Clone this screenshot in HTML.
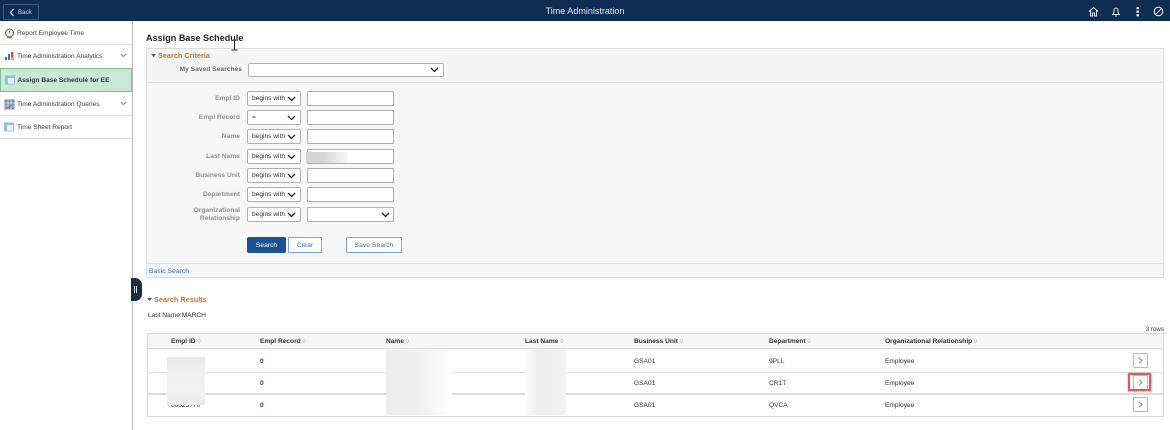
<!DOCTYPE html>
<html><head><meta charset="utf-8">
<style>
html,body{margin:0;padding:0;background:#fff}
#p{position:relative;width:1170px;height:430px;overflow:hidden;background:#fff;font-family:"Liberation Sans",sans-serif;font-size:6.6px;color:#333;filter:blur(.35px)}
#p div,#p svg{position:absolute;box-sizing:border-box}
.t{white-space:nowrap}
.sep{left:0;width:132px;height:1px;background:#dcdcdc}
.nav{left:17px;font-size:6.6px;color:#3c3c3c;white-space:nowrap;line-height:9px}
.lab{right:930px;font-size:6.7px;font-weight:bold;color:#8f8f8f;white-space:nowrap;line-height:9px;text-align:right}
.sel{left:247px;width:54px;height:15px;border:1px solid #b0b0b0;border-radius:2px;background:#fff;font-size:6.6px;line-height:13px;padding-left:4px;color:#333}
.inp{left:307px;width:87px;height:15px;border:1px solid #b0b0b0;border-radius:1px;background:#fff}
.th{font-size:6.6px;font-weight:bold;color:#333;white-space:nowrap;line-height:9px;top:337px}
.th span{font-weight:normal;color:#aaa}
.td{font-size:6.6px;color:#333;white-space:nowrap;line-height:9px}
.rb{left:1133px;width:15px;height:15px;border:1px solid #b8b8b8;border-radius:2px;background:#fff}
</style></head><body><div id="p">
<!-- header -->
<div style="left:0;top:0;width:1170px;height:21px;background:#0f2d52"></div>
<div style="left:3px;top:4px;width:36px;height:16px;border:1px solid #3f5a7c;border-radius:2px"></div>
<svg style="left:9px;top:8px" width="6" height="9" viewBox="0 0 6 9"><path d="M4.5 1L1.5 4.5L4.5 8" fill="none" stroke="#e8edf3" stroke-width="1.1"/></svg>
<div class="t" style="left:18px;top:8px;font-size:6.2px;line-height:9px;color:#d4dce6">Back</div>
<div class="t" style="left:0;width:1170px;top:5px;text-align:center;font-size:9px;line-height:12px;color:#e4e9ef">Time Administration</div>
<svg style="left:1088px;top:6px" width="11" height="11" viewBox="0 0 11 11"><path d="M1 5.5L5.5 1.5L10 5.5M2.5 4.5V10H4.5V7H6.5V10H8.5V4.5" fill="none" stroke="#e8edf3" stroke-width="1"/></svg>
<svg style="left:1111px;top:6px" width="10" height="11" viewBox="0 0 10 11"><path d="M1 8.5H9M2 8.5C3 7 3 6 3 4.5C3 3 4 2 5 2C6 2 7 3 7 4.5C7 6 7 7 8 8.5M4 10H6" fill="none" stroke="#e8edf3" stroke-width="1"/></svg>
<svg style="left:1135px;top:6px" width="6" height="11" viewBox="0 0 6 11"><rect x="1.5" y="1" width="2.4" height="2.2" fill="#eef1f5"/><rect x="1.5" y="4.6" width="2.4" height="2.2" fill="#eef1f5"/><rect x="1.5" y="8.2" width="2.4" height="2.2" fill="#eef1f5"/></svg>
<svg style="left:1153px;top:6px" width="11" height="11" viewBox="0 0 11 11"><circle cx="5.5" cy="5.5" r="4.3" fill="none" stroke="#e8edf3" stroke-width="1.1"/><path d="M3 8L8 3" stroke="#e8edf3" stroke-width="1.1"/></svg>

<!-- sidebar -->
<div style="left:132px;top:21px;width:1px;height:409px;background:#bdbdbd"></div>
<div class="sep" style="top:44px"></div>
<div class="sep" style="top:115px"></div>
<div class="sep" style="top:138px"></div>
<div style="left:0;top:68px;width:132px;height:24px;background:#c9e8d5;border:1px solid #7fbf98"></div>

<svg style="left:4px;top:28px" width="11" height="11" viewBox="0 0 11 11"><circle cx="5.5" cy="5" r="4" fill="#f4efe6" stroke="#6b5a4a" stroke-width="1"/><path d="M5.5 2.6V5.3" stroke="#b5462f" stroke-width="1"/><path d="M3 9.8H8" stroke="#7a6a55" stroke-width="1"/></svg>
<div class="nav" style="top:29px">Report Employee Time</div>
<svg style="left:4px;top:51px" width="11" height="11" viewBox="0 0 11 11"><rect x="1" y="6" width="2" height="3" fill="#3f6ea8"/><rect x="4" y="3" width="2" height="6" fill="#3f6ea8"/><rect x="7" y="1" width="2" height="5" fill="#c0562f"/><rect x="7" y="6" width="3" height="3" fill="#e8a93c"/></svg>
<div class="nav" style="top:52px">Time Administration Analytics</div>
<svg style="left:120px;top:53px" width="7" height="5" viewBox="0 0 7 5"><path d="M1 1L3.5 3.5L6 1" fill="none" stroke="#8a8a8a"/></svg>
<svg style="left:5px;top:75px" width="10" height="10" viewBox="0 0 10 10"><rect width="10" height="9" y=".5" fill="#8fbfe0"/><rect x="3" y="3" width="6.2" height="5.7" fill="#eef5fa"/></svg>
<div class="nav" style="top:76px;left:17.5px;font-weight:bold;color:#333">Assign Base Schedule for EE</div>
<svg style="left:4px;top:99px" width="11" height="11" viewBox="0 0 11 11"><rect x=".5" y=".5" width="10" height="10" fill="#6f8fb5"/><path d="M1 4H10M1 7H10M4 1V10M7 1V10" stroke="#dfe7f0" stroke-width=".8"/><path d="M3 9L8 6" stroke="#b5462f"/></svg>
<div class="nav" style="top:100px">Time Administration Queries</div>
<svg style="left:120px;top:101px" width="7" height="5" viewBox="0 0 7 5"><path d="M1 1L3.5 3.5L6 1" fill="none" stroke="#8a8a8a"/></svg>
<svg style="left:4px;top:122px" width="10" height="10" viewBox="0 0 10 10"><rect width="10" height="9" y=".5" fill="#8fbfe0"/><rect x="3" y="3" width="6.2" height="5.7" fill="#eef5fa"/></svg>
<div class="nav" style="top:123px">Time Sheet Report</div>

<!-- collapse handle -->
<div style="left:131px;top:278px;width:11px;height:23px;background:#1b2c44;border-radius:0 7px 7px 0"></div>
<div style="left:134px;top:286px;width:1px;height:7px;background:#e0e4ea"></div>
<div style="left:136px;top:286px;width:1px;height:7px;background:#e0e4ea"></div>

<!-- title -->
<div class="t" style="left:146px;top:32px;font-size:9.05px;line-height:12px;font-weight:bold;color:#222;letter-spacing:.02px">Assign Base Schedule</div>

<!-- search criteria box -->
<div style="left:146px;top:48px;width:1018px;height:230px;border:1px solid #dcdcdc;background:#f7f7f7;border-radius:2px"></div>
<div style="left:147px;top:49px;width:1016px;height:33px;background:#f5f5f5"></div>
<div style="left:147px;top:82px;width:1016px;height:1px;background:#dedede"></div>
<div style="left:147px;top:263px;width:1016px;height:1px;background:#dedede"></div>
<svg style="left:151px;top:54px" width="5" height="4" viewBox="0 0 5 4"><path d="M0 0H5L2.5 3Z" fill="#6e5a45"/></svg>
<div class="t" style="left:158px;top:51px;font-size:7.3px;line-height:9px;font-weight:bold;color:#c07a3f">Search Criteria</div>
<svg style="left:230px;top:39px" width="9" height="13" viewBox="0 0 9 13"><path d="M3 1H6M4.5 1V11M1.5 11H7.5" fill="none" stroke="#222" stroke-width="1"/></svg>
<div class="lab" style="top:65px;right:928px;color:#6e6e6e">My Saved Searches</div>
<div class="sel" style="left:248px;top:63px;width:196px;height:14px"></div>
<svg style="left:430px;top:67px" width="9" height="6" viewBox="0 0 9 6"><path d="M1 1L4.5 4.5L8 1" fill="none" stroke="#222" stroke-width="1.3"/></svg>

<div class="lab" style="top:94px">Empl ID</div>
<div class="sel" style="top:91px">begins with</div>
<div class="inp" style="top:91px"></div>
<div class="lab" style="top:113px">Empl Record</div>
<div class="sel" style="top:110px">=</div>
<div class="inp" style="top:110px"></div>
<div class="lab" style="top:132px">Name</div>
<div class="sel" style="top:129px">begins with</div>
<div class="inp" style="top:129px"></div>
<div class="lab" style="top:152px">Last Name</div>
<div class="sel" style="top:149px">begins with</div>
<div class="inp" style="top:149px"></div>
<div style="left:306px;top:152px;width:42px;height:11px;background:linear-gradient(90deg,#d4d4d4,#d4d4d4 40%,#f8f8f8)"></div>
<div class="lab" style="top:171px">Business Unit</div>
<div class="sel" style="top:168px">begins with</div>
<div class="inp" style="top:168px"></div>
<div class="lab" style="top:190px">Department</div>
<div class="sel" style="top:187px">begins with</div>
<div class="inp" style="top:187px"></div>
<div class="lab" style="top:207px;line-height:8px">Organizational<br>Relationship</div>
<div class="sel" style="top:207px">begins with</div>
<div class="inp" style="top:207px"></div>
<svg style="left:287px;top:96px" width="9" height="6" viewBox="0 0 9 6"><path d="M1 1L4.5 4.5L8 1" fill="none" stroke="#222" stroke-width="1.3"/></svg>
<svg style="left:287px;top:115px" width="9" height="6" viewBox="0 0 9 6"><path d="M1 1L4.5 4.5L8 1" fill="none" stroke="#222" stroke-width="1.3"/></svg>
<svg style="left:287px;top:134px" width="9" height="6" viewBox="0 0 9 6"><path d="M1 1L4.5 4.5L8 1" fill="none" stroke="#222" stroke-width="1.3"/></svg>
<svg style="left:287px;top:154px" width="9" height="6" viewBox="0 0 9 6"><path d="M1 1L4.5 4.5L8 1" fill="none" stroke="#222" stroke-width="1.3"/></svg>
<svg style="left:287px;top:173px" width="9" height="6" viewBox="0 0 9 6"><path d="M1 1L4.5 4.5L8 1" fill="none" stroke="#222" stroke-width="1.3"/></svg>
<svg style="left:287px;top:192px" width="9" height="6" viewBox="0 0 9 6"><path d="M1 1L4.5 4.5L8 1" fill="none" stroke="#222" stroke-width="1.3"/></svg>
<svg style="left:287px;top:212px" width="9" height="6" viewBox="0 0 9 6"><path d="M1 1L4.5 4.5L8 1" fill="none" stroke="#222" stroke-width="1.3"/></svg>
<svg style="left:381px;top:212px" width="9" height="6" viewBox="0 0 9 6"><path d="M1 1L4.5 4.5L8 1" fill="none" stroke="#222" stroke-width="1.3"/></svg>

<div class="t" style="left:247px;top:237px;width:39px;height:16px;background:#1b5294;border-radius:2px;color:#fff;font-size:6.8px;line-height:17px;text-align:center">Search</div>
<div class="t" style="left:288px;top:237px;width:34px;height:16px;background:#fff;border:1px solid #7fa6d6;border-radius:1px;color:#3f6fb0;font-size:6.8px;line-height:15px;text-align:center">Clear</div>
<div class="t" style="left:346px;top:237px;width:56px;height:16px;background:#fff;border:1px solid #7fa6d6;border-radius:1px;color:#3f6fb0;font-size:6.8px;line-height:15px;text-align:center">Save Search</div>
<div class="t" style="left:149px;top:267px;font-size:6.8px;line-height:9px;color:#2f6db5">Basic Search</div>

<!-- results -->
<svg style="left:147px;top:298px" width="5" height="4" viewBox="0 0 5 4"><path d="M0 0H5L2.5 3Z" fill="#6e5a45"/></svg>
<div class="t" style="left:154px;top:295px;font-size:7.3px;line-height:9px;font-weight:bold;color:#c07a3f">Search Results</div>
<div class="t" style="left:148px;top:311px;font-size:6.6px;line-height:9px;color:#333">Last Name:MARCH</div>
<div class="t" style="right:6px;top:325px;font-size:6.2px;line-height:9px;color:#333">3 rows</div>

<div style="left:147px;top:333px;width:1017px;height:84px;border:1px solid #d8d8d8;background:#fff"></div>
<div style="left:148px;top:334px;width:1015px;height:15px;background:#f6f6f6;border-bottom:1px solid #d8d8d8"></div>
<div style="left:148px;top:372px;width:1015px;height:1px;background:#e2e2e2"></div>
<div style="left:148px;top:393px;width:1015px;height:2px;background:#dcdcdc"></div>

<div class="th" style="left:171px">Empl ID <span>&#9674;</span></div>
<div class="th" style="left:260px">Empl Record <span>&#9674;</span></div>
<div class="th" style="left:386px">Name <span>&#9674;</span></div>
<div class="th" style="left:525px">Last Name <span>&#9674;</span></div>
<div class="th" style="left:634px">Business Unit <span>&#9674;</span></div>
<div class="th" style="left:769px">Department <span>&#9674;</span></div>
<div class="th" style="left:885px">Organizational Relationship <span>&#9674;</span></div>

<div class="td" style="left:171px;top:401px">00025770</div>
<div class="td" style="left:260px;top:357px;color:#1b3f72;font-weight:bold">0</div>
<div class="td" style="left:260px;top:379px;color:#1b3f72;font-weight:bold">0</div>
<div class="td" style="left:260px;top:401px;color:#1b3f72;font-weight:bold">0</div>
<div class="td" style="left:634px;top:357px">GSA01</div>
<div class="td" style="left:634px;top:379px">GSA01</div>
<div class="td" style="left:634px;top:401px">GSA01</div>
<div class="td" style="left:769px;top:357px;color:#3a3a3a">9PLL</div>
<div class="td" style="left:769px;top:379px;color:#3a3a3a">CR1T</div>
<div class="td" style="left:769px;top:401px;color:#3a3a3a">QVCA</div>
<div class="td" style="left:885px;top:357px">Employee</div>
<div class="td" style="left:885px;top:379px">Employee</div>
<div class="td" style="left:885px;top:401px">Employee</div>

<!-- blurred redactions -->
<div style="left:167px;top:357px;width:38px;height:48px;background:linear-gradient(180deg,#e6e6e6,#f0f0f0 30%,#f2f2f2 70%,#eaeaea)"></div>
<div style="left:386px;top:350px;width:66px;height:65px;background:linear-gradient(90deg,#ececec,#f0f0f0 50%,#fff)"></div>
<div style="left:525px;top:349px;width:41px;height:66px;background:linear-gradient(90deg,#fff,#eeeeee 30%,#f1f1f1)"></div>

<!-- row buttons -->
<div class="rb" style="top:353px"></div>
<div class="rb" style="top:375px"></div>
<div class="rb" style="top:397px"></div>
<svg style="left:1138px;top:357px" width="5" height="7" viewBox="0 0 5 7"><path d="M1 .8L4 3.5L1 6.2" fill="none" stroke="#888"/></svg>
<svg style="left:1138px;top:379px" width="5" height="7" viewBox="0 0 5 7"><path d="M1 .8L4 3.5L1 6.2" fill="none" stroke="#888"/></svg>
<svg style="left:1138px;top:401px" width="5" height="7" viewBox="0 0 5 7"><path d="M1 .8L4 3.5L1 6.2" fill="none" stroke="#888"/></svg>
<div style="left:1128px;top:373px;width:23px;height:18px;border:2px solid #e8575c;box-shadow:0 0 2px rgba(120,60,60,.5)"></div>
</div></body></html>
